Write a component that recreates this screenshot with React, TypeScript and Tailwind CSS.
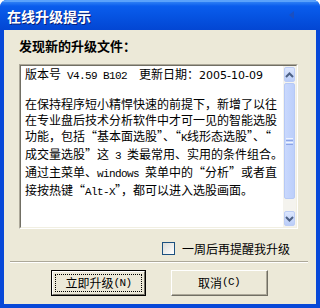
import React from "react";

const cjk = { fontFamily: '"Noto Sans CJK SC", "Noto Sans", sans-serif' };
const mono = { fontFamily: '"Liberation Mono", "DejaVu Sans Mono", monospace' };

function A({ children }: { children: React.ReactNode }) {
  return (
    <span className="text-[11px] tracking-[-0.6px]" style={mono}>
      {children}
    </span>
  );
}

function ScrollBar() {
  return (
    <div className="flex h-full w-[16px] flex-col bg-[#f4f3ee]">
      <div className="m-[1px] flex h-[15px] items-center justify-center rounded-[2px] border border-[#bccdf6] bg-gradient-to-b from-[#dde7fe] to-[#bacdf8]">
        <svg width="9" height="6" viewBox="0 0 9 6">
          <path d="M1 5 L4.5 1.5 L8 5" stroke="#4d6185" strokeWidth="2" fill="none" />
        </svg>
      </div>
      <div className="mx-[1px] flex h-[116px] items-center justify-center rounded-[2px] border border-[#b6c9f5] bg-gradient-to-r from-[#c9d8fd] to-[#bccffb]">
        <div className="flex flex-col gap-[1px]">
          <div className="h-[1px] w-[7px] bg-[#eef3fe]" />
          <div className="h-[1px] w-[7px] bg-[#8ca4e6]" />
          <div className="h-[1px] w-[7px] bg-[#eef3fe]" />
          <div className="h-[1px] w-[7px] bg-[#8ca4e6]" />
        </div>
      </div>
      <div className="flex-1" />
      <div className="m-[1px] flex h-[15px] items-center justify-center rounded-[2px] border border-[#bccdf6] bg-gradient-to-b from-[#dde7fe] to-[#bacdf8]">
        <svg width="9" height="6" viewBox="0 0 9 6">
          <path d="M1 1 L4.5 4.5 L8 1" stroke="#4d6185" strokeWidth="2" fill="none" />
        </svg>
      </div>
    </div>
  );
}

export default function App() {
  return (
    <div className="flex h-[308px] w-[320px] flex-col overflow-hidden rounded-t-[7px] bg-[#0748d8]" style={cjk}>
      {/* title bar */}
      <div className="relative h-[30px] shrink-0 bg-gradient-to-b from-[#3d8ff8] via-[#0a5ded] via-20% to-[#0346d3]">
        <div className="absolute inset-x-0 top-0 h-[2px] bg-[#5aa2fb]" />
        <div className="absolute right-[26px] top-[11px] h-0 w-0 border-y-[4px] border-r-[5px] border-y-transparent border-r-[#1b4fc0]" />
        <div className="absolute left-[7px] top-[8px] text-[14px] font-bold leading-[16px] text-white [text-shadow:1px_1px_0_#0a1e78]">
          在线升级提示
        </div>
      </div>
      {/* body */}
      <div className="mx-[4px] mb-[4px] flex flex-1 flex-col bg-[#ece9d8]">
        <div className="ml-[15px] mt-[9px] h-[14px] text-[13px] font-bold leading-[14px] text-black">
          发现新的升级文件：
        </div>
        {/* text box */}
        <div className="ml-[15px] mt-[11px] h-[165px] w-[279px] border border-b-white border-l-[#aca899] border-r-white border-t-[#aca899]">
          <div className="flex h-full w-full border border-b-[#f1efe2] border-l-[#716f64] border-r-[#f1efe2] border-t-[#716f64] bg-white">
            <div className="flex-1 pl-[4px] text-[12px] leading-[16px] text-black">
              <div className="whitespace-pre">
                版本号<A> V4.59 B102  </A>更新日期：<span className="text-[11px]" style={{ fontFamily: '"DejaVu Sans", sans-serif' }}>2005-10-09</span>
              </div>
              <div className="mt-[12px] whitespace-pre">
                <div>在保持程序短小精悍快速的前提下，新增了以往</div>
                <div>在专业盘后技术分析软件中才可一见的智能选股</div>
                <div>功能，包括“基本面选股”、“<A>K</A>线形态选股”、“</div>
                <div>成交量选股”这<A> 3 </A>类最常用、实用的条件组合。</div>
                <div>通过主菜单、<A>windows </A>菜单中的“分析”或者直</div>
                <div>接按热键“<A>Alt-X</A>”，都可以进入选股画面。</div>
              </div>
            </div>
            <ScrollBar />
          </div>
        </div>
        {/* checkbox */}
        <div className="ml-[158px] mt-[13px] flex h-[13px] items-center gap-[7px]">
          <div className="h-[13px] w-[13px] border border-[#1c5180] bg-gradient-to-br from-[#dcdcd7] to-white" />
          <span className="text-[12px] leading-[13px] text-black">一周后再提醒我升级</span>
        </div>
        {/* separator */}
        <div className="ml-[6px] mr-[8px] mt-[6px] h-[2px] border-b border-t border-b-white border-t-[#aca899]" />
        {/* buttons */}
        <div className="ml-[47px] mt-[7px] flex gap-[25px]">
          <div className="h-[26px] w-[95px] border border-black">
            <div className="h-full w-full border border-b-[#716f64] border-l-white border-r-[#716f64] border-t-white bg-[#ece9d8] p-[2px]">
              <div className="flex h-full w-full items-center justify-center border border-dotted border-black text-[12px] text-black">
                立即升级<A>(N)</A>
              </div>
            </div>
          </div>
          <div className="h-[26px] w-[97px] border border-b-[#716f64] border-l-white border-r-[#716f64] border-t-white">
            <div className="flex h-full w-full items-center justify-center border-b border-r border-b-[#aca899] border-r-[#aca899] bg-[#ece9d8] text-[12px] text-black">
              取消<A> (C)</A>
            </div>
          </div>
        </div>
      </div>
    </div>
  );
}
